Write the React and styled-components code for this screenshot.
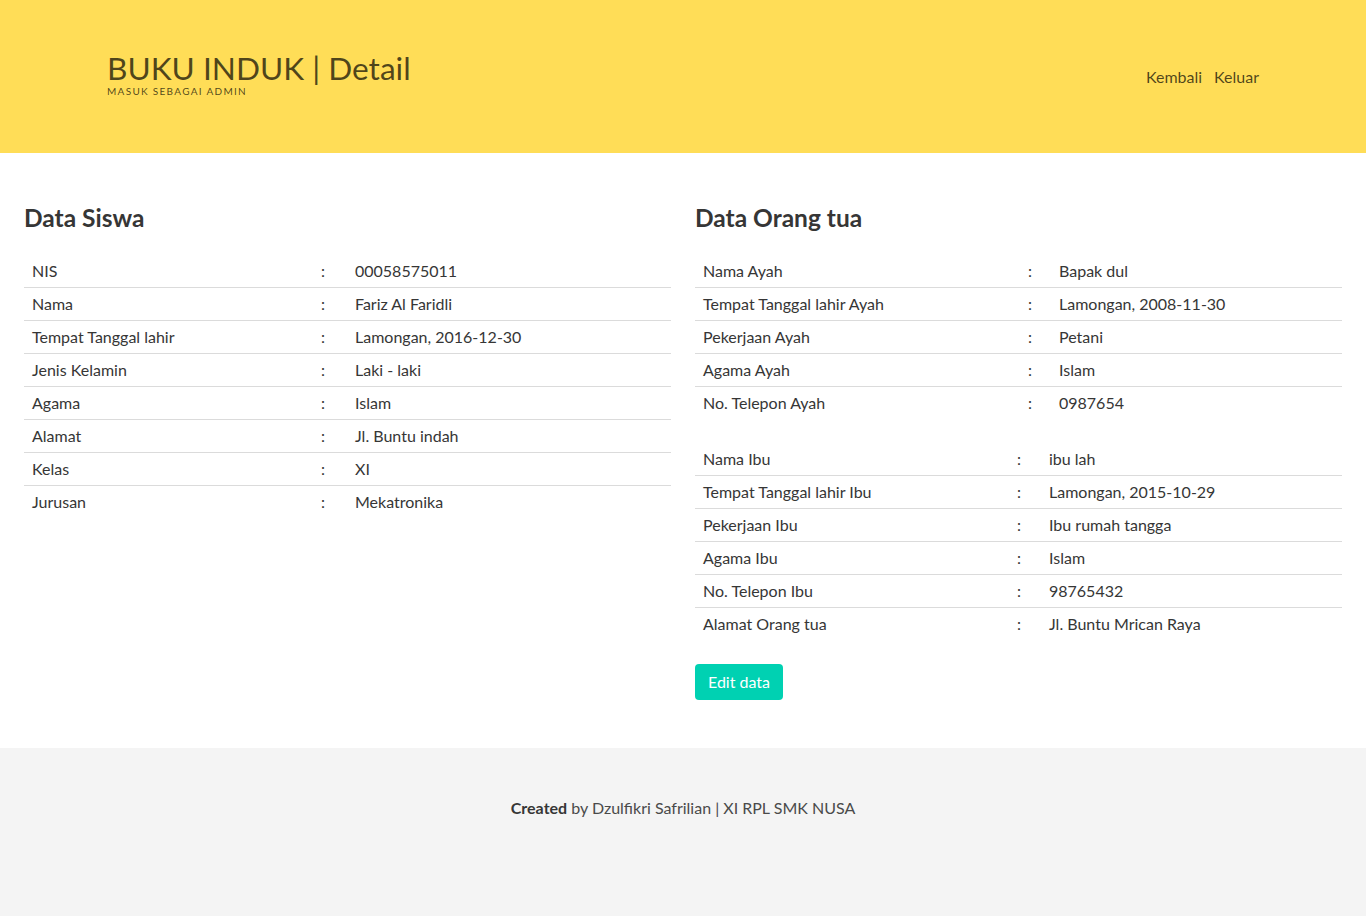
import React from "react";
import styled, { createGlobalStyle } from "styled-components";

const GlobalStyle = createGlobalStyle`
  html, body { margin: 0; padding: 0; background: #fff; }
  body { font-family: Lato, "Open Sans", sans-serif; font-size: 16px; color: #4a4a4a; line-height: 1.5; }
  * { box-sizing: border-box; }
`;

const Hero = styled.header`
  background: #ffdd57;
  height: 153px;
  display: flex;
  align-items: center;
`;

const HeroContainer = styled.div`
  width: 1152px;
  margin: 0 auto;
  display: flex;
  align-items: center;
  justify-content: space-between;
`;

const Brand = styled.div`
  display: flex;
  flex-direction: column;
  padding-bottom: 6px;
  color: rgba(0, 0, 0, 0.7);
`;

const Title = styled.h1`
  margin: 0;
  font-size: 31.6px;
  font-weight: 400;
  line-height: 36px;
`;

const Subtitle = styled.div`
  margin-top: -1px;
  font-size: 10px;
  line-height: 12px;
  letter-spacing: 1.3px;
  text-transform: uppercase;
`;

const Nav = styled.nav`
  display: flex;
  gap: 12px;
`;

const NavLink = styled.a`
  color: rgba(0, 0, 0, 0.7);
  text-decoration: none;
  font-size: 16px;
  line-height: 24px;
  cursor: pointer;
`;

const Section = styled.main`
  padding: 48px 24px;
  display: grid;
  grid-template-columns: 1fr 1fr;
  column-gap: 24px;
  align-items: start;
`;

const Column = styled.section`
  display: flex;
  flex-direction: column;
`;

const Heading = styled.h2`
  margin: 3px 0 24px;
  font-size: 24.5px;
  font-weight: 700;
  line-height: 27px;
  color: #363636;
`;

const Table = styled.div`
  display: flex;
  flex-direction: column;
  margin-bottom: 24px;
`;

const Row = styled.div`
  display: grid;
  grid-template-columns: ${(p) => p.$cols};
  border-bottom: 1px solid #dbdbdb;
  &:last-child { border-bottom: none; }
`;

const Cell = styled.div`
  padding: 4px 8px;
  font-size: 16px;
  line-height: 24px;
  color: #363636;
  white-space: nowrap;
`;

const Button = styled.button`
  align-self: flex-start;
  height: 36px;
  padding: 0 13px;
  border: none;
  border-radius: 4px;
  background: #00d1b2;
  color: #fff;
  font-family: inherit;
  font-size: 16px;
  line-height: 24px;
  cursor: pointer;
`;

const Footer = styled.footer`
  background: #f4f4f4;
  padding: 48px 24px 96px;
  text-align: center;
  color: #4a4a4a;
  line-height: 24px;
  strong { color: #363636; font-weight: 700; }
`;

const siswa = [
  ["NIS", "00058575011"],
  ["Nama", "Fariz Al Faridli"],
  ["Tempat Tanggal lahir", "Lamongan, 2016-12-30"],
  ["Jenis Kelamin", "Laki - laki"],
  ["Agama", "Islam"],
  ["Alamat", "Jl. Buntu indah"],
  ["Kelas", "XI"],
  ["Jurusan", "Mekatronika"],
];

const ayah = [
  ["Nama Ayah", "Bapak dul"],
  ["Tempat Tanggal lahir Ayah", "Lamongan, 2008-11-30"],
  ["Pekerjaan Ayah", "Petani"],
  ["Agama Ayah", "Islam"],
  ["No. Telepon Ayah", "0987654"],
];

const ibu = [
  ["Nama Ibu", "ibu lah"],
  ["Tempat Tanggal lahir Ibu", "Lamongan, 2015-10-29"],
  ["Pekerjaan Ibu", "Ibu rumah tangga"],
  ["Agama Ibu", "Islam"],
  ["No. Telepon Ibu", "98765432"],
  ["Alamat Orang tua", "Jl. Buntu Mrican Raya"],
];

function DataTable({ rows, cols }) {
  return (
    <Table>
      {rows.map(([k, v]) => (
        <Row key={k} $cols={cols}>
          <Cell>{k}</Cell>
          <Cell>:</Cell>
          <Cell>{v}</Cell>
        </Row>
      ))}
    </Table>
  );
}

export default function App() {
  return (
    <>
      <GlobalStyle />
      <Hero>
        <HeroContainer>
          <Brand>
            <Title>BUKU INDUK | Detail</Title>
            <Subtitle>Masuk sebagai admin</Subtitle>
          </Brand>
          <Nav>
            <NavLink>Kembali</NavLink>
            <NavLink>Keluar</NavLink>
          </Nav>
        </HeroContainer>
      </Hero>
      <Section>
        <Column>
          <Heading>Data Siswa</Heading>
          <DataTable rows={siswa} cols="289px 34px 1fr" />
        </Column>
        <Column>
          <Heading>Data Orang tua</Heading>
          <DataTable rows={ayah} cols="325px 31px 1fr" />
          <DataTable rows={ibu} cols="314px 32px 1fr" />
          <Button>Edit data</Button>
        </Column>
      </Section>
      <Footer>
        <strong>Created</strong> by Dzulfikri Safrilian | XI RPL SMK NUSA
      </Footer>
    </>
  );
}
